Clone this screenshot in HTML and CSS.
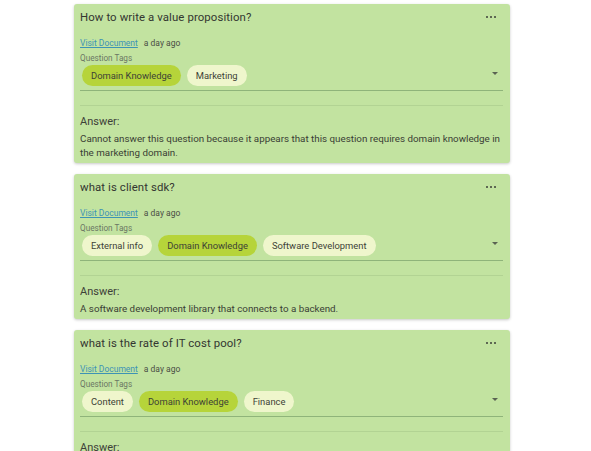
FILE: index.html
```html
<!DOCTYPE html>
<html>
<head>
<meta charset="utf-8">
<link rel="stylesheet" href="styles.css">
</head>
<body>
<div class="list">
  <div class="card">
    <div class="head">
      <div class="title">How to write a value proposition?</div>
      <div class="more"><span></span><span></span><span></span></div>
    </div>
    <div class="meta"><a class="link" href="#">Visit Document</a><span class="ago">a day ago</span></div>
    <div class="label">Question Tags</div>
    <div class="tags">
      <div class="chips">
        <span class="chip dark">Domain Knowledge</span>
        <span class="chip">Marketing</span>
      </div>
      <span class="caret"></span>
    </div>
    <div class="spacer"></div>
    <div class="answer-label">Answer:</div>
    <div class="answer">Cannot answer this question because it appears that this question requires domain knowledge in the marketing domain.</div>
  </div>

  <div class="card">
    <div class="head">
      <div class="title">what is client sdk?</div>
      <div class="more"><span></span><span></span><span></span></div>
    </div>
    <div class="meta"><a class="link" href="#">Visit Document</a><span class="ago">a day ago</span></div>
    <div class="label">Question Tags</div>
    <div class="tags">
      <div class="chips">
        <span class="chip">External info</span>
        <span class="chip dark">Domain Knowledge</span>
        <span class="chip">Software Development</span>
      </div>
      <span class="caret"></span>
    </div>
    <div class="spacer"></div>
    <div class="answer-label">Answer:</div>
    <div class="answer">A software development library that connects to a backend.</div>
  </div>

  <div class="card">
    <div class="head">
      <div class="title">what is the rate of IT cost pool?</div>
      <div class="more"><span></span><span></span><span></span></div>
    </div>
    <div class="meta"><a class="link" href="#">Visit Document</a><span class="ago">a day ago</span></div>
    <div class="label">Question Tags</div>
    <div class="tags">
      <div class="chips">
        <span class="chip">Content</span>
        <span class="chip dark">Domain Knowledge</span>
        <span class="chip">Finance</span>
      </div>
      <span class="caret"></span>
    </div>
    <div class="spacer"></div>
    <div class="answer-label">Answer:</div>
    <div class="answer">The rate of IT cost pool is not available.</div>
  </div>
</div>
</body>
</html>
```

FILE: styles.css
```css
html, body {
  margin: 0;
  padding: 0;
  background: #ffffff;
  font-family: Roboto, "Liberation Sans", sans-serif;
  overflow: hidden;
}

.list {
  width: 436px;
  padding: 4px 0 0 74px;
  display: flex;
  flex-direction: column;
  gap: 11px;
}

.card {
  background: #c2e3a0;
  border-radius: 3px;
  box-shadow: 0 1px 3px rgba(0, 0, 0, 0.22);
  padding: 4px 7px 3px 6px;
  color: #3a3d36;
}

.head {
  display: flex;
  justify-content: space-between;
  align-items: center;
  height: 18px;
}

.title {
  font-size: 11.4px;
  color: #333631;
  letter-spacing: 0.1px;
}

.more {
  display: flex;
  gap: 1.5px;
  margin-right: 7px;
}

.more span {
  width: 2.5px;
  height: 2.5px;
  border-radius: 50%;
  background: #3b3f38;
}

.meta {
  margin-top: 11px;
  height: 12px;
  line-height: 12px;
  font-size: 8.5px;
  display: flex;
  gap: 6px;
}

.link {
  color: #3d93b5;
  text-decoration: underline;
}

.ago {
  color: #4a4e45;
}

.label {
  margin-top: 4px;
  height: 10px;
  line-height: 10px;
  font-size: 8.2px;
  color: #6b7764;
}

.tags {
  margin-top: 2px;
  display: flex;
  align-items: center;
  justify-content: space-between;
  padding: 0 0 4px 2px;
  border-bottom: 1px solid #8fb47a;
}

.chips {
  display: flex;
  gap: 6px;
}

.chip {
  height: 21px;
  line-height: 21px;
  padding: 0 9px;
  border-radius: 11px;
  font-size: 9.4px;
  background: #eff6cc;
  color: #3d4236;
}

.chip.dark {
  background: #b6d43a;
}

.caret {
  width: 0;
  height: 0;
  border-left: 3px solid transparent;
  border-right: 3px solid transparent;
  border-top: 3.5px solid #5a6352;
  margin-right: 5px;
  margin-top: -4px;
}

.spacer {
  height: 14px;
  border-bottom: 1px solid #b2d393;
}

.answer-label {
  margin-top: 9px;
  font-size: 11px;
  line-height: 14px;
  color: #3d4138;
}

.answer {
  margin-top: 3px;
  font-size: 9.8px;
  line-height: 14px;
  color: #3a3e35;
}
```
